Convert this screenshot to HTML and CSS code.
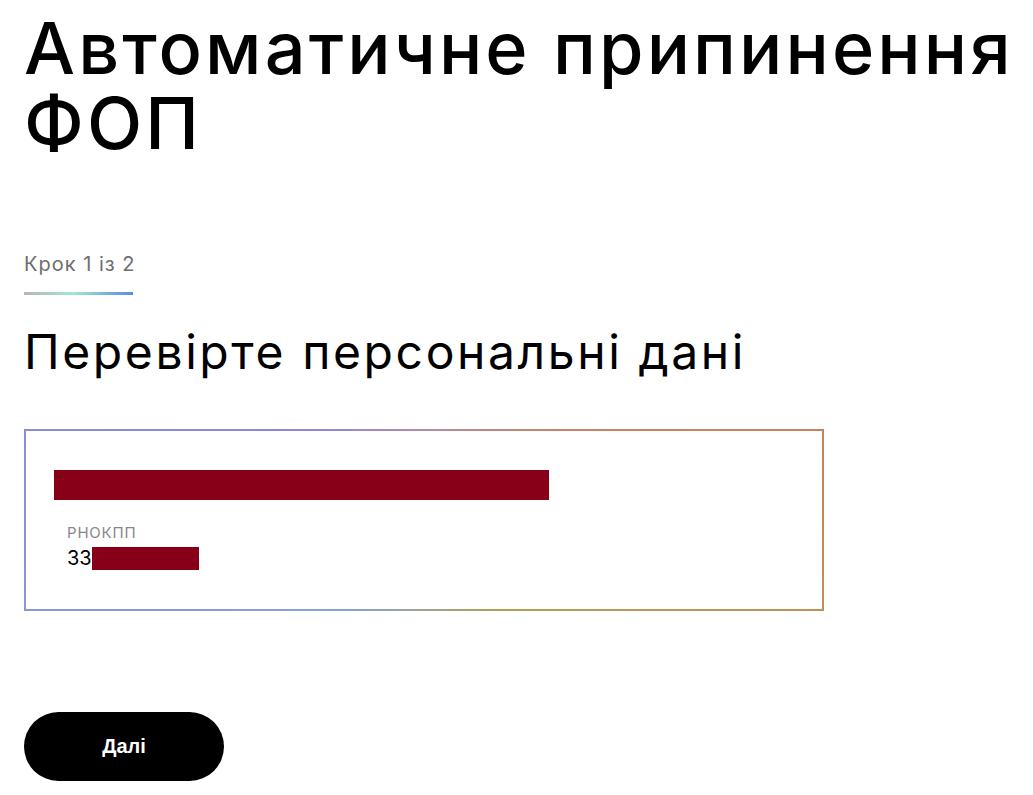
FILE: index.html
```html
<!DOCTYPE html>
<html lang="uk">
<head>
<meta charset="utf-8">
<title>Автоматичне припинення ФОП</title>
<link rel="stylesheet" href="styles.css">
</head>
<body>
<main class="page">
  <h1 class="title">Автоматичне припинення ФОП</h1>
  <div class="step">
    <span class="step-text">Крок 1 із 2</span>
    <span class="step-bar"></span>
  </div>
  <h2 class="subtitle">Перевірте персональні дані</h2>
  <section class="card">
    <div class="redact redact-name"></div>
    <div class="field">
      <div class="field-label">РНОКПП</div>
      <div class="field-value">33<span class="redact redact-code"></span></div>
    </div>
  </section>
  <button class="btn" type="button">Далі</button>
</main>
</body>
</html>
```
FILE: styles.css
```css
* { box-sizing: border-box; }
html, body { margin: 0; padding: 0; background: #fff; }
body {
  font-family: Inter, "Noto Sans", "Liberation Sans", sans-serif;
  color: #000;
}
.page {
  padding: 10px 0 0 24px;
  display: flex;
  flex-direction: column;
  align-items: flex-start;
}
.title {
  margin: 0;
  font-size: 72px;
  line-height: 75px;
  font-weight: 500;
  letter-spacing: 3.1px;
  width: 1005px;
}
.step {
  margin-top: 92px;
  display: flex;
  flex-direction: column;
  align-items: flex-start;
}
.step-text {
  font-size: 20px;
  line-height: 24px;
  color: #6e6e6e;
  font-weight: 400;
  letter-spacing: 1px;
}
.step-bar {
  margin-top: 16px;
  width: 109px;
  height: 3px;
  background: linear-gradient(90deg, #b6b6b6 0%, #9fe8d3 45%, #5a8be0 100%);
}
.subtitle {
  margin: 28px 0 0;
  font-size: 48px;
  line-height: 58px;
  font-weight: 400;
  letter-spacing: 2.6px;
}
.card {
  margin-top: 48px;
  width: 800px;
  height: 182px;
  border: 2px solid transparent;
  background:
    linear-gradient(#fff, #fff) padding-box,
    conic-gradient(from 0deg, #b08ea6 0deg, #c48670 50deg, #c8805c 80deg, #b89858 110deg, #a8a454 140deg, #a2a294 180deg, #86a4d8 225deg, #8a86d8 300deg, #a08ac4 330deg, #b08ea6 360deg) border-box;
  padding: 39px 28px 0 28px;
}
.redact {
  display: inline-block;
  background: #880018;
}
.redact-name {
  display: block;
  width: 495px;
  height: 30px;
}
.field {
  margin: 24px 0 0 13px;
}
.field-label {
  font-size: 15px;
  line-height: 18px;
  color: #888;
  text-transform: uppercase;
  letter-spacing: 0.8px;
}
.field-value {
  margin-top: 5px;
  font-size: 20px;
  line-height: 23px;
  display: flex;
  align-items: center;
}
.redact-code {
  width: 107px;
  height: 23px;
}
.btn {
  margin-top: 101px;
  width: 200px;
  height: 69px;
  border: none;
  border-radius: 35px;
  background: #000;
  color: #fff;
  font-family: "Liberation Sans", Arial, sans-serif;
  font-weight: 700;
  font-size: 20px;
  cursor: pointer;
}
```
